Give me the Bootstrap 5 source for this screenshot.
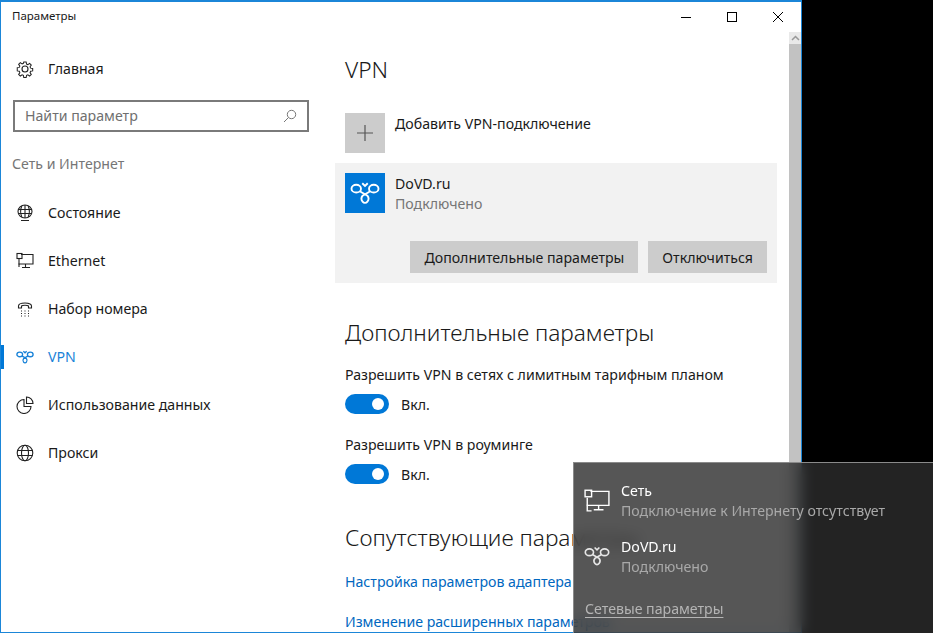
<!doctype html>
<html lang="ru">
<head>
<meta charset="utf-8">
<title>Параметры</title>
<link href="https://cdn.jsdelivr.net/npm/bootstrap@5.3.0/dist/css/bootstrap.min.css" rel="stylesheet">
<style>
html,body{height:100%;margin:0;overflow:hidden}
body{background:#000;font-family:"Noto Sans","Open Sans",sans-serif;font-size:14.15px;color:#1a1a1a;line-height:20px}
.stage{width:933px;height:633px;position:relative;overflow:hidden}
.win{width:802px;height:633px;background:#fff;border:solid #1b86d8;border-width:2px 1px 1px 1px;overflow:hidden}
.ttl{height:30px;padding:4px 0 0 11px;font-size:11.5px}
.wbtn{width:46px;height:30px}
.side{width:333px;flex:none}
.navrow{height:48px;padding-left:15px;color:#1a1a1a;position:relative}
.navrow svg{width:18px;height:18px;margin-right:14px;flex:none}
.navrow.on{color:#1a83d8}
.navrow.on::before{content:"";position:absolute;left:-1px;top:12px;width:4px;height:24px;background:#0078d7}
.sbox{margin:0 0 0 12px;width:296px;height:32px;border:2px solid #7a7a7a;color:#6f6f6f;padding:0 10px}
.sect{color:#767676;padding-left:11px;height:48px}
.mainp{width:444px;flex:none;padding-left:11px;position:relative}
.h1x{font-size:22.7px;line-height:30px;font-weight:300;color:#1a1a1a}
.tile{width:40px;height:40px;flex:none}
.tplus{background:#cccccc}
.tlogo{background:#0078d7}
.vcard{background:#f2f2f2;margin-left:-10px;height:120px;padding:10px;width:442px}
.mut{color:#767676}
.wbt{background:#cccccc;height:32px;color:#1a1a1a;padding:1px 14px 0;border:0;border-radius:0;font-size:14.15px}
.tog{width:44px;height:20px;border-radius:10px;background:#0078d7;position:relative;flex:none;margin-right:12px}
.tog::after{content:"";position:absolute;right:5px;top:4px;width:12px;height:12px;border-radius:50%;background:#fff}
.togtxt{padding-top:2px;line-height:18px}
.lnk{color:#0067c0;display:block;white-space:nowrap}
.sbar{width:12px;flex:none;margin-left:auto;background:#f0f0f0;position:relative}
.sarr{height:12px;background:#e9e9e9}
.sthumb{height:600px;background:#c2c2c2}
.fly{position:absolute;left:573px;top:462px;width:360px;height:171px;background:rgba(44,44,44,.8);-webkit-backdrop-filter:blur(7px);backdrop-filter:blur(7px);border-top:1px solid #8a8a8a;border-left:1px solid #8a8a8a;color:#fff}
.fitem{height:56px;padding-left:10px}
.fitem svg{width:26px;height:26px;margin-right:11px;flex:none}
.ftxt{padding-top:2px}
.fmut{color:#a9a9a9}
.flnk{color:#b5b5b5;text-decoration:underline;text-underline-offset:3px;margin-left:11px;display:inline-block}
</style>
</head>
<body>
<div class="stage">
  <div class="win">
    <div class="d-flex">
      <div class="ttl flex-grow-1">Параметры</div>
      <div class="d-flex">
        <div class="wbtn d-flex align-items-center justify-content-center"><svg width="12" height="12" viewBox="0 0 12 12"><path d="M1 6.5h10" stroke="#000" fill="none"/></svg></div>
        <div class="wbtn d-flex align-items-center justify-content-center"><svg width="12" height="12" viewBox="0 0 12 12"><rect x="1.5" y="1.5" width="9" height="9" stroke="#000" fill="none"/></svg></div>
        <div class="wbtn d-flex align-items-center justify-content-center"><svg width="12" height="12" viewBox="0 0 12 12"><path d="M1 1l10 10M11 1L1 11" stroke="#000" fill="none"/></svg></div>
      </div>
    </div>
    <div class="d-flex" style="height:600px">
      <div class="side">
        <div class="navrow d-flex align-items-center" style="margin-top:13px"><svg viewBox="0 0 18 18" fill="none" stroke="#222" stroke-width="1.1"><circle cx="9" cy="9" r="3"/><path d="M7.7 1.5h2.6l.4 2.2 1.4.6 1.9-1.3 1.8 1.8-1.3 1.9.6 1.4 2.2.4v2.6l-2.2.4-.6 1.4 1.3 1.9-1.8 1.8-1.9-1.3-1.4.6-.4 2.2H7.7l-.4-2.2-1.4-.6-1.9 1.3-1.8-1.8 1.3-1.9-.6-1.4-2.2-.4V7.7l2.2-.4.6-1.4-1.3-1.9 1.8-1.8 1.9 1.3 1.4-.6z" transform="translate(.6 .6) scale(.93)"/></svg>Главная</div>
        <div class="sbox d-flex align-items-center justify-content-between" style="margin-top:7px">Найти параметр<svg width="14" height="14" viewBox="0 0 14 14" fill="none" stroke="#777"><circle cx="8.5" cy="5.5" r="4.2"/><path d="M5.5 8.5L1 13"/></svg></div>
        <div class="sect d-flex align-items-center" style="margin-top:8px">Сеть и Интернет</div>
        <div class="navrow d-flex align-items-center" style="margin-top:1px"><svg viewBox="0 0 18 18" fill="none" stroke="#222" stroke-width="1.1"><ellipse cx="9" cy="7.5" rx="7" ry="6.5"/><path d="M2 5.5h14M2 9.5h14M9 1v13M5.8 2c-1.3 3-1.3 8 0 11M12.2 2c1.3 3 1.3 8 0 11M5 16.5h8"/></svg>Состояние</div>
        <div class="navrow d-flex align-items-center"><svg viewBox="0 0 18 18" fill="none" stroke="#222" stroke-width="1.1"><path d="M5 2.500h12v9.500H3v3M6 15.500h8M9.500 12v3.500"/><rect x="1" y="1.500" width="5" height="5"/><path d="M3 6.500v6"/></svg>Ethernet</div>
        <div class="navrow d-flex align-items-center"><svg viewBox="0 0 18 18" fill="none" stroke="#222" stroke-width="1.1"><path d="M2.500 8V6c0-4 13-4 13 0v2h-3V6c-1-1-6-1-7 0v2z"/><path d="M5 11h1M8.500 11h1M12 11h1M5 13.500h1M8.500 13.500h1M12 13.500h1M5 16h1M8.500 16h1M12 16h1"/></svg>Набор номера</div>
        <div class="navrow on d-flex align-items-center"><svg viewBox="0 3 24 24" fill="none" stroke="#1a83d8" stroke-width="1.8"><ellipse cx="5" cy="11.500" rx="3.800" ry="3.100"/><ellipse cx="19" cy="11.500" rx="3.800" ry="3.100"/><path d="M7.800 13.600L13.900 17.100A2.700 3.400 0 1 1 10.100 17.100L16.200 13.600M9.800 7.200l2.200 2.200 2.200-2.200"/></svg>VPN</div>
        <div class="navrow d-flex align-items-center"><svg viewBox="0 0 18 18" fill="none" stroke="#222" stroke-width="1.1"><path d="M8 3.500a7 7 0 1 0 7 7H8z"/><path d="M10.500 1v6.500H17A6.500 6.500 0 0 0 10.500 1z"/></svg>Использование данных</div>
        <div class="navrow d-flex align-items-center"><svg viewBox="0 0 18 18" fill="none" stroke="#222" stroke-width="1.1"><circle cx="9" cy="9" r="7.800"/><ellipse cx="9" cy="9" rx="3.500" ry="7.800"/><path d="M1.500 6.500h15M1.500 11.500h15"/></svg>Прокси</div>
      </div>
      <div class="mainp">
        <div class="h1x" style="margin-top:23px">VPN</div>
        <div class="d-flex" style="margin-top:28px"><div class="tile tplus d-flex align-items-center justify-content-center"><svg width="16" height="16" viewBox="0 0 16 16"><path d="M8 0v16M0 8h16" stroke="#555" stroke-width="1.2"/></svg></div><div style="margin:1px 0 0 10px">Добавить VPN-подключение</div></div>
        <div class="vcard" style="margin-top:10px">
          <div class="d-flex"><div class="tile tlogo d-flex align-items-center justify-content-center"><svg width="30" height="30" viewBox="0 3 24 24" fill="none" stroke="#fff" stroke-width="1.500"><ellipse cx="5" cy="11.500" rx="3.800" ry="3.100"/><ellipse cx="19" cy="11.500" rx="3.800" ry="3.100"/><path d="M7.800 13.600L13.900 17.100A2.700 3.400 0 1 1 10.100 17.100L16.200 13.600M9.800 7.200l2.200 2.200 2.200-2.200"/></svg></div><div style="margin:1px 0 0 10px"><div>DoVD.ru</div><div class="mut">Подключено</div></div></div>
          <div class="d-flex justify-content-end gap-2" style="margin-top:27px"><button class="wbt" style="margin-right:2px">Дополнительные параметры</button><button class="wbt">Отключиться</button></div>
        </div>
        <div class="h1x" style="margin-top:35px">Дополнительные параметры</div>
        <div style="margin-top:17px">Разрешить VPN в сетях с лимитным тарифным планом</div>
        <div class="d-flex align-items-center" style="margin-top:9px"><div class="tog"></div><span class="togtxt">Вкл.</span></div>
        <div style="margin-top:21px">Разрешить VPN в роуминге</div>
        <div class="d-flex align-items-center" style="margin-top:9px"><div class="tog"></div><span class="togtxt">Вкл.</span></div>
        <div class="h1x text-nowrap" style="margin-top:39px">Сопутствующие параметры</div>
        <a class="lnk text-decoration-none" style="margin-top:19px" href="#">Настройка параметров адаптера</a>
        <a class="lnk text-decoration-none" style="margin-top:20px" href="#">Изменение расширенных параметров</a>
      </div>
      <div class="sbar"><div class="sarr d-flex align-items-center justify-content-center"><svg width="9" height="6" viewBox="0 0 9 6"><path d="M1 5l3.500-3.500L8 5" stroke="#999" stroke-width="1.500" fill="none"/></svg></div><div class="sthumb"></div></div>
    </div>
  </div>
  <div class="fly">
    <div class="fitem d-flex align-items-center" style="margin-top:9px"><svg viewBox="0 0 24 24" fill="none" stroke="#fff" stroke-width="1.300"><path d="M6 4h17v13H3v5h4M9 21h9M13.500 17v4"/><rect x="1" y="3" width="6" height="6"/><path d="M3 10v7"/></svg><div class="ftxt"><div>Сеть</div><div class="fmut text-nowrap">Подключение к Интернету отсутствует</div></div></div>
    <div class="fitem d-flex align-items-center"><svg viewBox="0 3 24 24" fill="none" stroke="#e6e6e6" stroke-width="1.500"><ellipse cx="5" cy="11.500" rx="3.800" ry="3.100"/><ellipse cx="19" cy="11.500" rx="3.800" ry="3.100"/><path d="M7.800 13.600L13.900 17.100A2.700 3.400 0 1 1 10.100 17.100L16.200 13.600M9.800 7.200l2.200 2.200 2.200-2.200"/></svg><div class="ftxt"><div>DoVD.ru</div><div class="fmut">Подключено</div></div></div>
    <a class="flnk" style="margin-top:15px" href="#">Сетевые параметры</a>
  </div>
</div>
</body>
</html>
